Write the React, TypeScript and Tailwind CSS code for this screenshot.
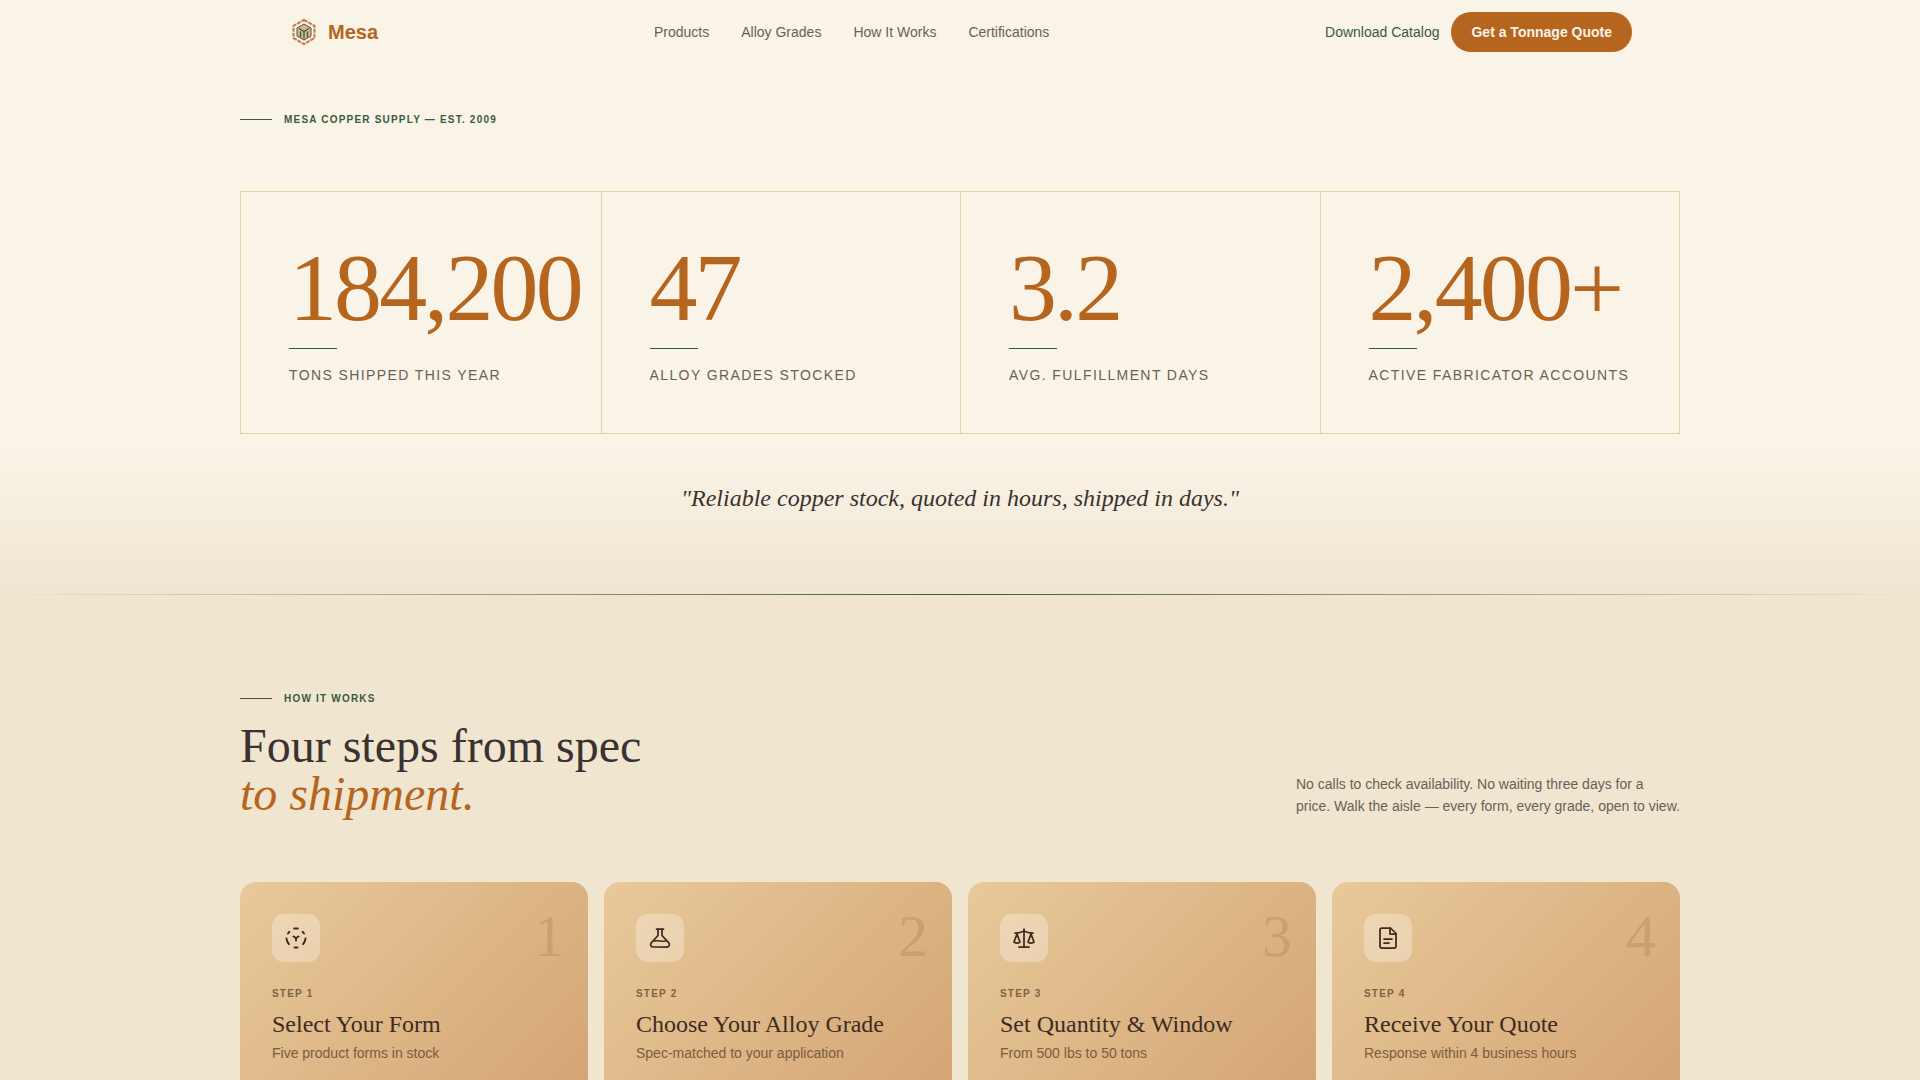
import { Scale } from 'lucide-react';

const serif = { fontFamily: '"Liberation Serif", serif' };

const stats = [
  { value: '184,200', label: 'Tons shipped this year' },
  { value: '47', label: 'Alloy grades stocked' },
  { value: '3.2', label: 'Avg. fulfillment days' },
  { value: '2,400+', label: 'Active fabricator accounts' },
];

function FormIcon() {
  return (
    <svg width="24" height="24" viewBox="0 0 24 24" fill="none" stroke="currentColor" strokeWidth="2" strokeLinecap="round" strokeLinejoin="round">
      <path d="M10.2 2.600Q12 2.200 13.800 2.600" />
      <path d="M18.700 5.800 20 7.500" />
      <path d="M5.300 5.800 4 7.500" />
      <path d="M21.500 12.500a10 10 0 0 1-2.400 5.600" />
      <path d="M2.500 12.500a10 10 0 0 0 2.400 5.600" />
      <path d="M10.500 21.500h3" />
      <path d="m9.500 10.500 2.500 1.500 2.500-1.500" />
      <path d="M12 12v2.500" />
    </svg>
  );
}

function FlaskIcon() {
  return (
    <svg width="24" height="24" viewBox="0 0 24 24" fill="none" stroke="currentColor" strokeWidth="1.75" strokeLinecap="round" strokeLinejoin="round">
      <path d="M8.500 3h7" />
      <path d="M10 3v6.500l-6.800 7.300a2.600 2.600 0 0 0 2 4.200h13.600a2.600 2.600 0 0 0 2-4.200L14 9.500V3" />
      <path d="M6.500 15c3.500-1 7.500 1 11 0" />
    </svg>
  );
}

function QuoteIcon() {
  return (
    <svg width="24" height="24" viewBox="0 0 24 24" fill="none" stroke="currentColor" strokeWidth="1.75" strokeLinecap="round" strokeLinejoin="round">
      <path d="M14.500 2H6a2 2 0 0 0-2 2v16a2 2 0 0 0 2 2h12a2 2 0 0 0 2-2V7.500Z" />
      <path d="M14 2v6h6" />
      <path d="M8 13h8" />
      <path d="M8 17h5" />
    </svg>
  );
}

const steps = [
  { n: 1, title: 'Select Your Form', sub: 'Five product forms in stock', icon: <FormIcon /> },
  { n: 2, title: 'Choose Your Alloy Grade', sub: 'Spec-matched to your application', icon: <FlaskIcon /> },
  { n: 3, title: 'Set Quantity & Window', sub: 'From 500 lbs to 50 tons', icon: <Scale size={24} strokeWidth={1.75} /> },
  { n: 4, title: 'Receive Your Quote', sub: 'Response within 4 business hours', icon: <QuoteIcon /> },
];

function Logo() {
  return (
    <svg width="32" height="32" viewBox="0 0 32 32" fill="none">
      <path d="M16 3.800 26.500 9.900V22.100L16 28.200 5.500 22.100V9.900Z" stroke="#c47a3d" strokeWidth="2" strokeDasharray="4 1" />
      <path d="M16 8 23 12V20L16 24 9 20V12Z" fill="#d9b48c" stroke="#3a5a40" strokeWidth="1" />
      <path d="M11 12.500 16 15.500l5-3M12.500 15.500v5.500M16 15.500v7M19.500 15.500v5.500" stroke="#3a5a40" strokeWidth="1.300" />
    </svg>
  );
}

function Eyebrow({ children }: { children: React.ReactNode }) {
  return (
    <div className="flex items-center gap-3">
      <span className="h-px w-8 bg-[#3a5a40]" />
      <span className="text-[10px] font-bold uppercase tracking-[0.12em] text-[#3a5a40]">{children}</span>
    </div>
  );
}

export default function App() {
  return (
    <div className="h-screen overflow-hidden bg-[#f0e6d0] text-[#3a3230]" style={{ fontFamily: '"Liberation Sans", sans-serif' }}>
      {/* Hero */}
      <div className="h-[594px] bg-[linear-gradient(180deg,#faf3e8_0%,#faf3e8_75%,#f0e6d0_100%)]">
        <header className="mx-auto flex h-16 w-[1344px] items-center">
          <div className="flex w-[366px] items-center gap-2">
            <Logo />
            <span className="text-xl font-bold text-[#b5651d]">Mesa</span>
          </div>
          <nav className="flex gap-8 text-sm text-[#6b5f55]">
            <a>Products</a>
            <a>Alloy Grades</a>
            <a>How It Works</a>
            <a>Certifications</a>
          </nav>
          <div className="ml-auto flex items-center gap-3 text-sm">
            <a className="text-[#3a5a40]">Download Catalog</a>
            <a className="flex h-10 items-center rounded-full bg-[#b5651d] px-5 font-bold text-[#faf3e8]">Get a Tonnage Quote</a>
          </div>
        </header>

        <div className="mx-auto w-[1440px] pt-12">
          <Eyebrow>Mesa Copper Supply — Est. 2009</Eyebrow>
          <div className="mt-16 grid h-[243px] grid-cols-[360.5px_359.5px_359.5px_1fr] border border-[#e6d2a8]">
            {stats.map((s, i) => (
              <div key={s.value} className={`px-12 pt-12 ${i < 3 ? 'border-r border-[#e6d2a8]' : ''}`}>
                <div className="text-[96px] leading-none tracking-[-0.03em] text-[#b5651d]" style={serif}>{s.value}</div>
                <div className="mt-3 h-px w-12 bg-[#3a5a40]" />
                <div className="mt-4 text-sm uppercase tracking-[0.1em] text-[#6b5f55]">{s.label}</div>
              </div>
            ))}
          </div>
          <p className="mt-12 text-center text-2xl italic text-[#3a3230]" style={serif}>"Reliable copper stock, quoted in hours, shipped in days."</p>
        </div>
      </div>

      <div className="h-px bg-[linear-gradient(90deg,transparent,#3a5a40_50%,transparent)]" />

      {/* How it works */}
      <section className="mx-auto w-[1440px] pt-[96px]">
        <Eyebrow>How It Works</Eyebrow>
        <div className="mt-4 flex items-end justify-between">
          <h2 className="text-5xl leading-none text-[#3a3230]" style={serif}>
            Four steps from spec<br />
            <em className="text-[#b5651d]">to shipment.</em>
          </h2>
          <p className="w-[384px] pb-px text-sm leading-[22px] text-[#6b5f55]">
            No calls to check availability. No waiting three days for a price. Walk the aisle — every form, every grade, open to view.
          </p>
        </div>
        <div className="mt-16 grid grid-cols-4 gap-4">
          {steps.map((s) => (
            <div key={s.n} className="relative h-[300px] rounded-2xl bg-[linear-gradient(135deg,#e8c99a_0%,#d4a574_85%)] p-8">
              <span className="absolute right-6 top-6 text-6xl leading-none text-[#8b5a2b]/20" style={serif}>{s.n}</span>
              <div className="flex h-12 w-12 items-center justify-center rounded-xl bg-white/30 text-[#3d2b1f]">{s.icon}</div>
              <div className="mt-6 text-[10px] font-bold uppercase tracking-[0.12em] text-[#7c6344]">Step {s.n}</div>
              <h3 className="mt-[7px] text-2xl text-[#3d2b1f]" style={serif}>{s.title}</h3>
              <p className="mt-[3px] text-sm text-[#7a5c3e]">{s.sub}</p>
            </div>
          ))}
        </div>
      </section>
    </div>
  );
}
